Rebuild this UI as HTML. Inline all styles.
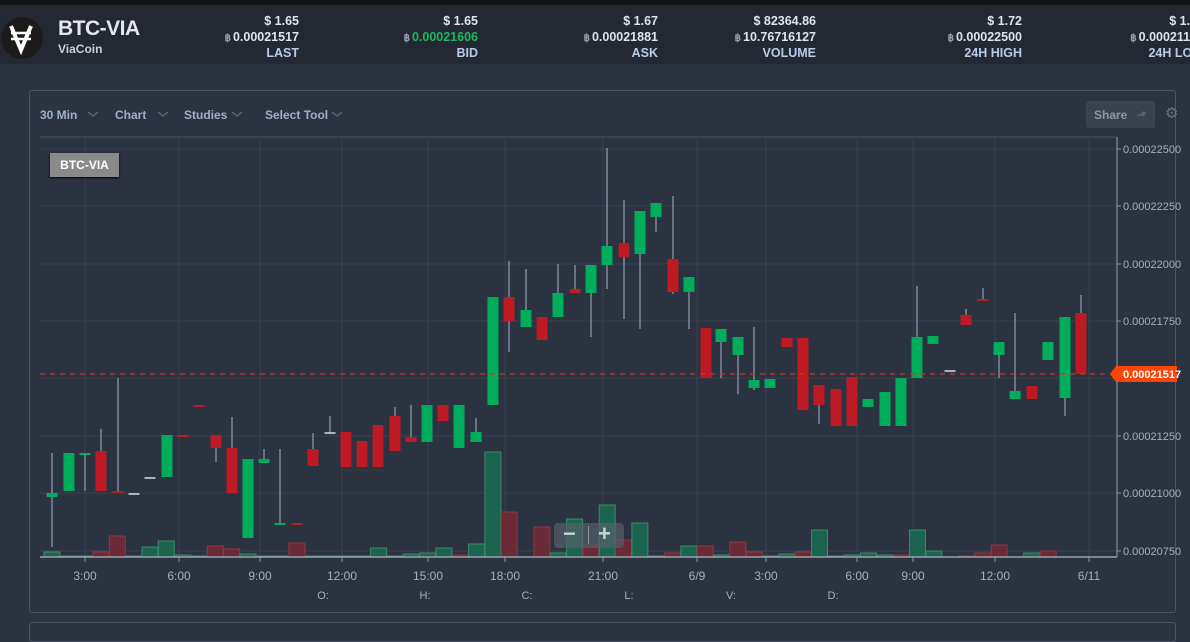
<!DOCTYPE html>
<html><head><meta charset="utf-8"><style>
*{margin:0;padding:0;box-sizing:border-box}
body{width:1190px;height:630px;overflow:hidden;background:#2b3341;font-family:"Liberation Sans",Arial,sans-serif;position:relative}
.top{position:absolute;left:0;top:0;width:1190px;height:5px;background:#101215}
.hdr{position:absolute;left:0;top:5px;width:1190px;height:59px;background:#232833}
.title{position:absolute;left:58px;top:17px;font-size:21px;font-weight:bold;color:#e4e7ec;letter-spacing:-.5px}
.sub{position:absolute;left:58px;top:42px;font-size:12px;font-weight:bold;color:#c9d0da}
.stat{position:absolute;top:14px;text-align:right;font-size:12.5px;font-weight:bold;line-height:15.5px;color:#dfe3ea;white-space:nowrap}
.stat .b{font-size:10px;color:#9aa2ad;margin-right:2px}
.stat .l{color:#b9cbe6}
.panel{position:absolute;left:29px;top:90px;width:1147px;height:523px;border:1px solid #4b5262;border-radius:3px}
.panel2{position:absolute;left:29px;top:622px;width:1147px;height:20px;border:1px solid #4b5262;border-radius:3px}
.tb{position:absolute;top:108px;font-size:12px;font-weight:bold;color:#9fb0c9}
.share{position:absolute;left:1086px;top:101px;width:69px;height:27px;background:#3a424f;border-radius:3px;color:#8c95a3;font-size:12px;font-weight:bold;padding:7px 0 0 8px}
</style></head><body>
<div class="top"></div>
<div class="hdr"></div>
<svg style="position:absolute;left:0;top:17px" width="44" height="44" viewBox="0 0 44 44">
<circle cx="22" cy="21" r="21" fill="#1d1a1b"/>
<path d="M11 9 L21 33 L31 9" fill="none" stroke="#fff" stroke-width="4"/>
<path d="M11 16 H31 M11 22 H31" stroke="#fff" stroke-width="2.5"/>
</svg>
<div class="title">BTC-VIA</div>
<div class="sub">ViaCoin</div>
<div class="stat" style="right:891px">$ 1.65<br><span class="b">฿</span>0.00021517<br><span class="l">LAST</span></div>
<div class="stat" style="right:712px">$ 1.65<br><span class="b">฿</span><span style="color:#1db862">0.00021606</span><br><span class="l">BID</span></div>
<div class="stat" style="right:532px">$ 1.67<br><span class="b">฿</span>0.00021881<br><span class="l">ASK</span></div>
<div class="stat" style="right:374px">$ 82364.86<br><span class="b">฿</span>10.76716127<br><span class="l">VOLUME</span></div>
<div class="stat" style="right:168px">$ 1.72<br><span class="b">฿</span>0.00022500<br><span class="l">24H HIGH</span></div>
<div class="stat" style="left:1089px;text-align:right;width:115px">$ 1.69<br><span class="b">฿</span>0.00021190<br><span class="l">24H LOW</span></div>
<div class="panel"></div>
<div class="panel2"></div>
<div class="tb" style="left:40px">30 Min</div>
<div class="tb" style="left:115px">Chart</div>
<div class="tb" style="left:184px">Studies</div>
<div class="tb" style="left:265px">Select Tool</div>
<svg style="position:absolute;left:0;top:0" width="1190" height="630">
<g fill="none" stroke="#5f6878" stroke-width="1.2">
<path d="M88 112l5 4 5-4M158 112l5 4 5-4M232 112l5 4 5-4M332 112l5 4 5-4"/>
</g>
</svg>
<div class="share">Share <span style="margin-left:6px;color:#5b6370">⬏</span></div>
<div style="position:absolute;left:1165px;top:104px;color:#6b7380;font-size:15px">⚙</div>
<svg id="c" style="position:absolute;left:0;top:0" width="1190" height="630"></svg>
<div style="position:absolute;left:50px;top:153px;width:69px;height:24px;background:#8a8a8a;color:#fff;font-size:12px;font-weight:bold;text-align:center;line-height:24px;box-shadow:0 1px 2px #000">BTC-VIA</div>
<div style="position:absolute;left:554px;top:523px;width:70px;height:25px;background:rgba(85,95,105,.7);border-radius:4px;color:#c8d6d0;font-size:22px;font-weight:bold;line-height:24px">
<span style="position:absolute;left:9px;top:-1px">−</span><span style="position:absolute;left:34px;top:3px;width:1px;height:18px;background:#8a949c"></span><span style="position:absolute;left:44px;top:-1px">+</span></div>
<script>
var s='';
var G='#00ad5c',R='#bd1a24';
var hy=[149,206,264,321,378,436,493,551];
var px=['0.00022500','0.00022250','0.00022000','0.00021750','0.00021500','0.00021250','0.00021000','0.00020750'];
s+='<line x1="40" y1="137" x2="1117" y2="137" stroke="#4b5262"/>';
hy.forEach(function(y,i){s+='<line x1="40" y1="'+y+'" x2="1117" y2="'+y+'" stroke="#3a4252"/>';s+='<line x1="1117" y1="'+y+'" x2="1121" y2="'+y+'" stroke="#8a93a0"/>';if(i!=4)s+='<text x="1123" y="'+(y+4)+'" fill="#a7afbc" font-size="11">'+px[i]+'</text>';});
var tx=[85,179,260,342,428,505,603,697,766,857,913,995,1089],tl=['3:00','6:00','9:00','12:00','15:00','18:00','21:00','6/9','3:00','6:00','9:00','12:00','6/11'];
tx.forEach(function(x,i){s+='<line x1="'+x+'" y1="137" x2="'+x+'" y2="557" stroke="#3a4252"/>';s+='<line x1="'+x+'" y1="557" x2="'+x+'" y2="562" stroke="#8a93a0"/>';s+='<text x="'+x+'" y="580" fill="#a7afbc" font-size="12" text-anchor="middle">'+tl[i]+'</text>';});
[['O:',323],['H:',425],['C:',527],['L:',629],['V:',731],['D:',833]].forEach(function(a){s+='<text x="'+a[1]+'" y="599" fill="#a7afbc" font-size="11" text-anchor="middle">'+a[0]+'</text>';});
var v=[[552,'g'],[556,'g'],[556,'g'],[552,'r'],[536,'r'],[556,'g'],[547,'g'],[541,'g'],[555,'g'],[556,'g'],[546,'r'],[549,'r'],[554,'g'],[556,'g'],[556,'g'],[543,'r'],[556,'g'],[556,'g'],[556,'g'],[556,'g'],[548,'g'],[556,'g'],[554,'g'],[553,'g'],[548,'g'],[555,'r'],[544,'g'],[452,'g'],[512,'r'],[557,'g'],[527,'r'],[553,'g'],[519,'g'],[545,'r'],[505,'g'],[540,'r'],[523,'g'],[556,'g'],[553,'r'],[546,'g'],[546,'r'],[555,'g'],[542,'r'],[552,'r'],[556,'g'],[554,'g'],[552,'r'],[530,'g'],[556,'g'],[555,'g'],[553,'g'],[555,'g'],[555,'r'],[530,'g'],[551,'g'],[557,'g'],[556,'r'],[553,'r'],[545,'r'],[557,'g'],[553,'g'],[551,'r']];
v.forEach(function(b,i){var x=52+i*16.33;if(b[0]<557)s+='<rect x="'+(x-8)+'" y="'+b[0]+'" width="16" height="'+(557-b[0])+'" fill="'+(b[1]=='g'?'#1b6550':'#6a2a38')+'" stroke="'+(b[1]=='g'?'#3c8a66':'#94363a')+'"/>';});
s+='<line x1="40" y1="557" x2="1117" y2="557" stroke="#9aa2ad" stroke-width="1.5"/><line x1="1117" y1="137" x2="1117" y2="557" stroke="#9aa2ad"/>';
var c=[[52,493,497,453,547,G],[69,453,491,0,0,G],[85,453,455,453,491,G],[101,451,491,429,0,R],[118,491,493,378,0,R],[134,493,494,0,0,'#aab3c2'],[150,477,478,0,0,'#aab3c2'],[167,435,477,0,0,G],[183,435,437,0,0,R],[199,405,407,0,0,R],[216,435,448,0,462,R],[232,448,493,417,0,R],[248,459,538,0,0,G],[264,459,463,449,0,G],[280,523,525,449,0,G],[297,523,525,0,0,R],[313,449,466,433,0,R],[330,432,433,416,0,'#aab3c2'],[346,432,467,0,0,R],[362,441,467,0,0,R],[378,425,467,0,0,R],[395,416,451,407,0,R],[411,437,442,405,0,R],[427,405,442,0,0,G],[443,405,421,0,0,R],[459,405,448,0,0,G],[476,432,442,418,0,G],[493,297,405,0,0,G],[509,297,321,261,352,R],[526,310,327,269,0,G],[542,317,340,0,0,R],[558,293,317,264,0,G],[575,289,293,265,0,R],[591,265,293,0,337,G],[607,246,265,148,289,G],[624,243,257,200,319,R],[640,211,254,0,329,G],[656,203,217,0,232,G],[673,259,292,196,294,R],[689,277,292,0,329,G],[706,328,378,0,0,R],[721,329,342,0,378,G],[738,337,355,0,394,G],[754,380,388,327,390,G],[770,379,388,0,0,G],[787,338,347,0,0,R],[803,338,410,0,0,R],[819,385,405,0,424,R],[836,389,426,0,0,R],[852,377,426,0,0,R],[868,399,407,0,0,G],[885,392,426,0,0,G],[901,378,426,0,0,G],[917,337,378,286,0,G],[933,336,344,0,0,G],[950,370,371,0,0,'#aab3c2'],[966,315,325,309,0,R],[983,299,301,288,0,R],[999,342,355,0,378,G],[1015,391,399,313,0,G],[1032,386,399,0,0,R],[1048,342,360,0,0,G],[1065,317,398,0,416,G],[1081,313,374,295,0,R]];
c.forEach(function(k){var hi=k[3]||k[1],lo=k[4]||k[2];if(hi<k[1]||lo>k[2])s+='<line x1="'+k[0]+'" y1="'+hi+'" x2="'+k[0]+'" y2="'+lo+'" stroke="#aab3c8"/>';s+='<rect x="'+(k[0]-5.5)+'" y="'+k[1]+'" width="11" height="'+Math.max(2,k[2]-k[1])+'" fill="'+k[5]+'"/>';});
s+='<line x1="40" y1="374" x2="1110" y2="374" stroke="#c8391c" stroke-dasharray="5,5" stroke-width="1.3"/>';
s+='<path d="M1110 374 L1116 366 H1177 V382 H1116 Z" fill="#ff4408"/><text x="1123" y="378" fill="#fff" font-size="11" font-weight="bold">0.00021517</text>';
document.getElementById('c').innerHTML=s;
</script>
</body></html>
